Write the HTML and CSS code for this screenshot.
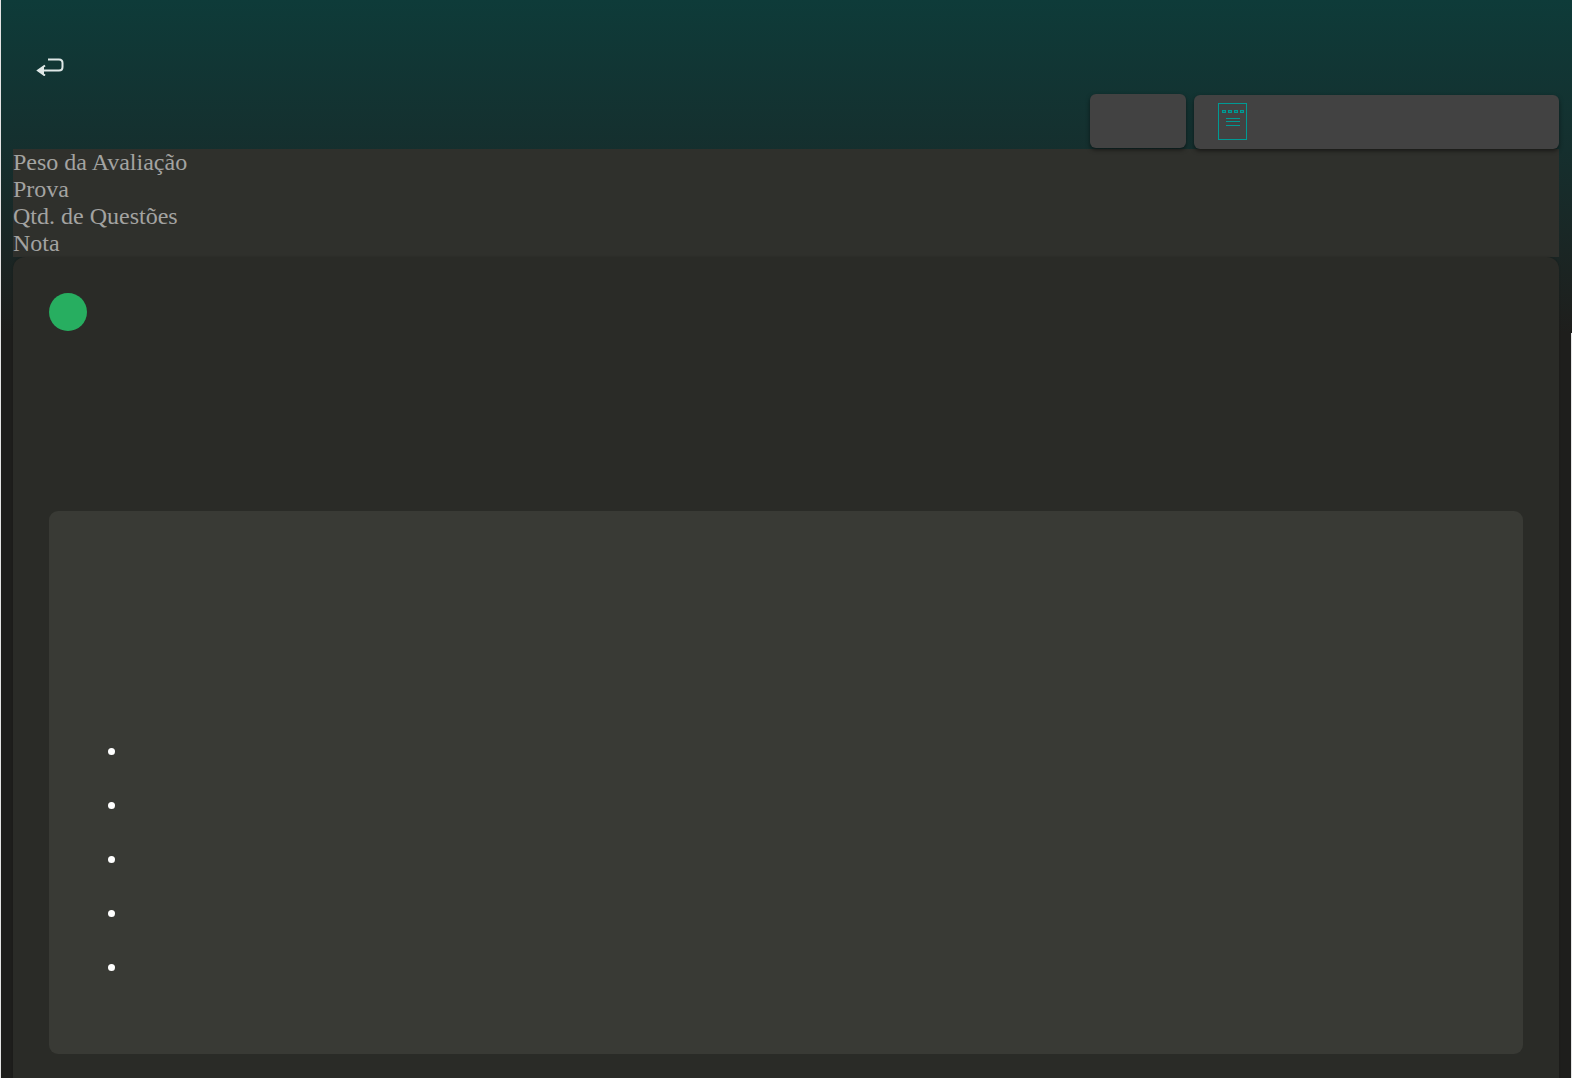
FILE: index.html
```html
<!DOCTYPE html>
<html lang="pt-BR">
<head>
    <meta charset="UTF-8">
    <meta name="viewport" content="width=device-width, initial-scale=1.0">
    <title>Prova</title>
    <link rel="stylesheet" href="styles.css">
</head>
<body>
    <div class="page">
        <header class="topbar">
            <a href="#" class="back" aria-label="Voltar">
                <svg width="28" height="18" viewBox="0 0 28 18" fill="none" stroke="#dfe8e7" stroke-width="2">
                    <path d="M12 1.500h11q3.500 0 3.500 3.500v4q0 3.500-3.500 3.500H3"/>
                    <path d="M9 7.500l-7 5 7 5"/>
                    <path d="M1 12.500l7-4v8z" fill="#dfe8e7" stroke="none"/>
                </svg>
            </a>
            <div class="actions">
                <button type="button" class="btn btn-small" aria-label="Tempo"></button>
                <button type="button" class="btn btn-wide" aria-label="Gabarito">
                    <svg width="29" height="37" viewBox="0 0 29 37" fill="none" stroke="#009a94" stroke-width="1">
                        <rect x="0.5" y="0.5" width="28" height="36"/>
                        <path d="M8 15.5h14M8 18.5h14M8 22.5h14"/>
                        <g fill="#1a6965">
                            <rect x="4.5" y="7.5" width="3" height="2"/>
                            <rect x="10.5" y="7.5" width="3" height="2"/>
                            <rect x="16.5" y="7.5" width="3" height="2"/>
                            <rect x="22.5" y="7.5" width="3" height="2"/>
                        </g>
                    </svg>
                </button>
            </div>
        </header>

        <div class="info">
            <div>Peso da Avaliação</div>
            <div>Prova</div>
            <div>Qtd. de Questões</div>
            <div>Nota</div>
        </div>

        <main class="card">
            <div class="number"></div>
            <div class="question">
                <ul class="options">
                    <li></li>
                    <li></li>
                    <li></li>
                    <li></li>
                    <li></li>
                </ul>
            </div>
        </main>
    </div>
</body>
</html>
```

FILE: styles.css
```css
* {
    margin: 0;
    padding: 0;
    box-sizing: border-box;
}

html {
    background: #e4e4e4;
}

body {
    font-family: "Liberation Serif", "Times New Roman", serif;
    font-size: 24px;
    line-height: 27px;
    color: #fff;
}

.page {
    min-height: 100vh;
    margin-left: 1px;
    padding: 0 13px 0 12px;
    display: flex;
    flex-direction: column;
    background:
        linear-gradient(#0e3b39, #152f2e 150px, #1e1e1c 333px) top / 100% 333px no-repeat,
        linear-gradient(#1e1e1c, #1e1e1c) left / calc(100% - 1px) 100% no-repeat;
}

.topbar {
    position: relative;
    z-index: 1;
    height: 149px;
    display: flex;
    justify-content: space-between;
}

.back {
    padding: 58px 23px;
}

.back svg {
    display: block;
}

.actions {
    display: flex;
    align-items: flex-end;
    gap: 8px;
}

.btn {
    height: 54px;
    border: none;
    border-radius: 6px;
    background: #424242;
    box-shadow: 0 2px 4px rgba(0, 0, 0, 0.5);
    cursor: pointer;
}

.btn-small {
    width: 96px;
    margin-bottom: 1px;
}

.btn-wide {
    width: 365px;
    padding: 0 24px 2px;
    display: flex;
    align-items: center;
}

.info {
    background: #2f302c;
    color: #a3a3a1;
}

.card {
    flex: 1;
    padding: 36px 36px 24px;
    border-radius: 12px 12px 0 0;
    background: #2a2b27;
    box-shadow: 0 0 2px rgba(0, 0, 0, 0.2);
}

.number {
    width: 38px;
    height: 38px;
    border-radius: 50%;
    background: #27ae60;
}

.question {
    margin-top: 180px;
    padding: 227px 36px 46px;
    border-radius: 9px;
    background: #393a35;
}

.options {
    padding-left: 44px;
}

.options li {
    height: 27px;
    margin-bottom: 27px;
}
```
